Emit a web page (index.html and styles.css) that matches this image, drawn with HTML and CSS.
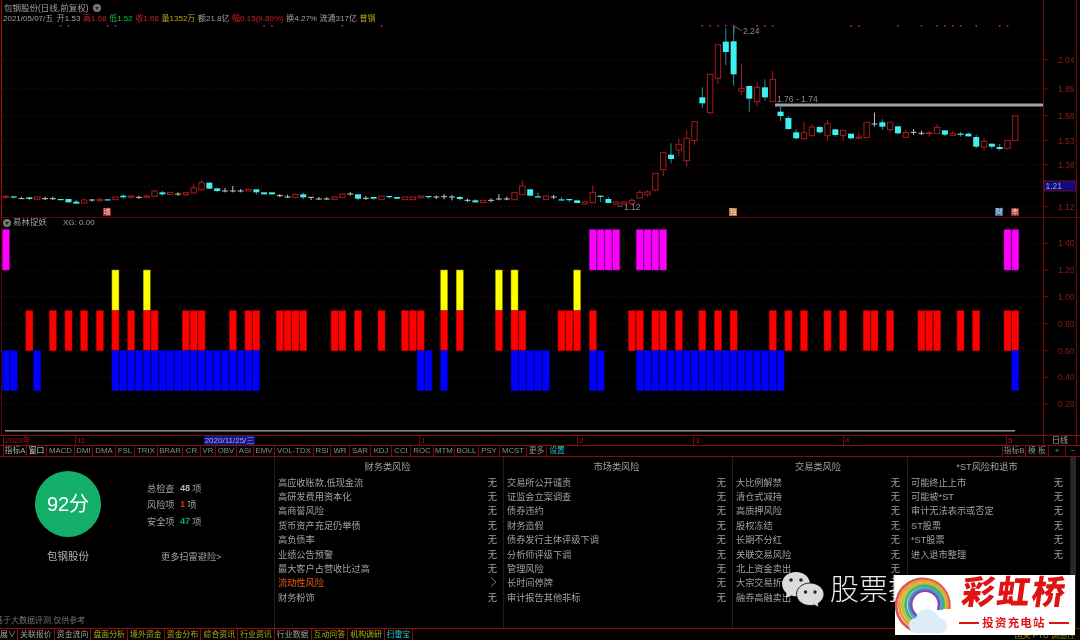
FILE: index.html
```html
<!DOCTYPE html>
<html lang="zh">
<head>
<meta charset="utf-8">
<title>包钢股份</title>
<link rel="stylesheet" href="styles.css">
</head>
<body>
<div class="app">
  <section class="pane pane-main">
    <svg id="main-chart" class="chart" width="1080" height="217" viewBox="0 0 1080 217"></svg>
    <div class="quote">
      <div class="quote-title">包钢股份(日线,前复权)
        <svg class="caret" width="8" height="8" viewBox="0 0 8 8"><circle cx="4" cy="4" r="4" fill="#777"/><path d="M2 3h4L4 6z" fill="#222"/></svg>
      </div>
      <div class="quote-line">
        <span class="q-date">2021/05/07/五</span>
        <span>开1.53</span>
        <span class="up">高1.68</span>
        <span class="down">低1.52</span>
        <span class="up">收1.68</span>
        <span class="vol">量1352万</span>
        <span>额21.8亿</span>
        <span class="up">幅0.15(9.80%)</span>
        <span>换4.27%</span>
        <span>流通317亿</span>
        <span class="vol">普钢</span>
      </div>
    </div>
    <span class="badge b-zeng">增</span>
    <span class="badge b-du">独</span>
    <span class="badge b-cai">财</span>
    <span class="badge b-chuan">串</span>
  </section>

  <section class="pane pane-sub">
    <svg id="sub-chart" class="chart" width="1080" height="217" viewBox="0 218 1080 217"></svg>
    <div class="sub-title">
      <svg class="caret" width="8" height="8" viewBox="0 0 8 8"><circle cx="4" cy="4" r="4" fill="#777"/><path d="M2 3h4L4 6z" fill="#222"/></svg>
      <span class="sub-name">易林捉妖</span>
      <span>XG: 0.00</span>
    </div>
  </section>

  <div class="date-row">
    <span class="tick t0">2020年</span>
    <span class="tick t1">11</span>
    <span class="date-cursor">2020/11/25/三</span>
    <span class="tick t2">1</span>
    <span class="tick t3">2</span>
    <span class="tick t4">3</span>
    <span class="tick t5">4</span>
    <span class="tick t6">5</span>
    <span class="period">日线</span>
  </div>

  <nav class="tab-row">
    <span class="tab w23 lit">指标A</span>
    <span class="tab w20 bright">窗口</span>
    <span class="tab w28">MACD</span>
    <span class="tab w18">DMI</span>
    <span class="tab w23">DMA</span>
    <span class="tab w19">FSL</span>
    <span class="tab w23">TRIX</span>
    <span class="tab w25">BRAR</span>
    <span class="tab w18">CR</span>
    <span class="tab w15">VR</span>
    <span class="tab w21">OBV</span>
    <span class="tab w17">ASI</span>
    <span class="tab w21">EMV</span>
    <span class="tab w39">VOL-TDX</span>
    <span class="tab w17">RSI</span>
    <span class="tab w19">WR</span>
    <span class="tab w21">SAR</span>
    <span class="tab w21">KDJ</span>
    <span class="tab w19">CCI</span>
    <span class="tab w23">ROC</span>
    <span class="tab w21">MTM</span>
    <span class="tab w24">BOLL</span>
    <span class="tab w21">PSY</span>
    <span class="tab w27">MCST</span>
    <span class="tab w20">更多</span>
    <span class="tab w21 cyan">设置</span>
    <span class="tab w23 push">指标B</span>
    <span class="tab w23">模 板</span>
    <span class="tab w17">+</span>
    <span class="tab w15">−</span>
  </nav>

  <section class="panel">
    <div class="score">
      <div class="score-main">
        <div class="gauge">
          <div class="gauge-circle">92分</div>
          <div class="gauge-name">包钢股份</div>
        </div>
        <div class="stats">
          <div class="stat"><span class="stat-label">总检查</span><b class="n-total">48</b><span>项</span></div>
          <div class="stat"><span class="stat-label">风险项</span><b class="n-risk">1</b><span>项</span></div>
          <div class="stat"><span class="stat-label">安全项</span><b class="n-safe">47</b><span>项</span></div>
          <div class="more">更多扫雷避险&gt;</div>
        </div>
      </div>
      <div class="footnote">基于大数据评测,仅供参考</div>
    </div>

    <div class="risk-col c1">
      <h3>财务类风险</h3>
      <div class="risk"><span>高应收账款,低现金流</span><i>无</i></div>
      <div class="risk"><span>高研发费用资本化</span><i>无</i></div>
      <div class="risk"><span>高商誉风险</span><i>无</i></div>
      <div class="risk"><span>货币资产充足仍举债</span><i>无</i></div>
      <div class="risk"><span>高负债率</span><i>无</i></div>
      <div class="risk"><span>业绩公告预警</span><i>无</i></div>
      <div class="risk"><span>最大客户占营收比过高</span><i>无</i></div>
      <div class="risk hot"><span>流动性风险</span><svg width="7" height="10" viewBox="0 0 7 10"><path d="M1 .5 6 5 1 9.5" fill="none" stroke="#777"/></svg></div>
      <div class="risk"><span>财务粉饰</span><i>无</i></div>
    </div>
    <div class="risk-col c2">
      <h3>市场类风险</h3>
      <div class="risk"><span>交易所公开谴责</span><i>无</i></div>
      <div class="risk"><span>证监会立案调查</span><i>无</i></div>
      <div class="risk"><span>债券违约</span><i>无</i></div>
      <div class="risk"><span>财务造假</span><i>无</i></div>
      <div class="risk"><span>债券发行主体评级下调</span><i>无</i></div>
      <div class="risk"><span>分析师评级下调</span><i>无</i></div>
      <div class="risk"><span>管理风险</span><i>无</i></div>
      <div class="risk"><span>长时间停牌</span><i>无</i></div>
      <div class="risk"><span>审计报告其他非标</span><i>无</i></div>
    </div>
    <div class="risk-col c3">
      <h3>交易类风险</h3>
      <div class="risk"><span>大比例解禁</span><i>无</i></div>
      <div class="risk"><span>清仓式减持</span><i>无</i></div>
      <div class="risk"><span>高质押风险</span><i>无</i></div>
      <div class="risk"><span>股权冻结</span><i>无</i></div>
      <div class="risk"><span>长期不分红</span><i>无</i></div>
      <div class="risk"><span>关联交易风险</span><i>无</i></div>
      <div class="risk"><span>北上资金卖出</span><i>无</i></div>
      <div class="risk"><span>大宗交易折价</span><i>无</i></div>
      <div class="risk"><span>融券高融卖出</span><i>无</i></div>
    </div>
    <div class="risk-col c4">
      <h3>*ST风险和退市</h3>
      <div class="risk"><span>可能终止上市</span><i>无</i></div>
      <div class="risk"><span>可能被*ST</span><i>无</i></div>
      <div class="risk"><span>审计无法表示或否定</span><i>无</i></div>
      <div class="risk"><span>ST股票</span><i>无</i></div>
      <div class="risk"><span>*ST股票</span><i>无</i></div>
      <div class="risk"><span>进入退市整理</span><i>无</i></div>
    </div>
    <div class="scrollbar"></div>
  </section>

  <nav class="bottom-tabs">
    <span class="btab first">展∨</span>
    <span class="btab">关联报价</span>
    <span class="btab">资金流向</span>
    <span class="btab yellow">盘面分析</span>
    <span class="btab yellow">境外资金</span>
    <span class="btab yellow">资金分布</span>
    <span class="btab yellow">综合资讯</span>
    <span class="btab yellow">行业资讯</span>
    <span class="btab">行业数据</span>
    <span class="btab yellow">互动问答</span>
    <span class="btab yellow">机构调研</span>
    <span class="btab cyan last">扫雷宝</span>
    <span class="status">国关 PTU 调感性</span>
  </nav>

  <div class="watermark">
    <svg width="44" height="38" viewBox="0 0 44 38">
      <path d="M15 1C7 1 1 6.500 1 13c0 4 2 7 5 9.500L5 27l5-2.500c1.500.5 3 .7 5 .7C23 25.200 29 19.500 29 13S23 1 15 1z" fill="#dcdcdc"/>
      <path d="M29 12c-7.500 0-13.500 5-13.500 11.200S21.500 34.500 29 34.500c1.500 0 3-.2 4.300-.6L38 36.500l-1-4c3.500-2.200 6-5.500 6-9.300C43 17 36.500 12 29 12z" fill="#dcdcdc" stroke="#000" stroke-width=".8"/>
      <circle cx="10" cy="9" r="1.800" fill="#222"/><circle cx="20" cy="9" r="1.800" fill="#222"/>
      <circle cx="24.500" cy="21" r="1.700" fill="#222"/><circle cx="34" cy="21" r="1.700" fill="#222"/>
    </svg>
    <span class="wm-text">股票技</span>
  </div>

  <div class="logo">
    <svg class="rainbow" width="58" height="60" viewBox="0 0 58 60">
      <g fill="none" stroke-width="2.800">
        <path d="M21 56A26.500 26.500 0 1 1 54 34" stroke="#d8584e"/>
        <path d="M22 53A24 24 0 1 1 52 34" stroke="#ee9a35"/>
        <path d="M23 50.500A21.500 21.500 0 1 1 50 34" stroke="#b9c23f"/>
        <path d="M24 48A19 19 0 1 1 48 34" stroke="#4fae63"/>
        <path d="M25 45.500A16.500 16.500 0 1 1 46 35" stroke="#3ba7d8"/>
        <path d="M26 43A14 14 0 1 1 43 35" stroke="#7a52ad"/>
      </g>
      <path d="M22 58c-5 0-8-3.500-8-8 0-4 3-7 7-7 1-5 5-9 11-9 6 0 11 4 12 9 5 0 8 3.500 8 7.500 0 5-3.500 7.500-8 7.500z" fill="#dcedf8"/>
    </svg>
    <div class="logo-side">
      <div class="logo-name">彩虹桥</div>
      <div class="logo-tag"><i></i><span>投资充电站</span><i></i></div>
    </div>
  </div>
</div>
<script src="chart.js"></script>
</body>
</html>
```

FILE: styles.css
```css
* { box-sizing: border-box; }
html, body { margin: 0; background: #000; }
body { font-family: "Liberation Sans", "Noto Sans CJK SC", sans-serif; color: #a0a0a0; }

.app {
  position: relative;
  width: 1080px;
  height: 640px;
  overflow: hidden;
  background: #000;
  display: flex;
  flex-direction: column;
  filter: blur(.35px);
}

/* chart panes */
.pane { position: relative; flex: none; }
.pane-main { height: 218px; border-bottom: 1px solid #5e0606; }
.pane-sub { height: 218px; border-bottom: 1px solid #8c0a0a; }
.chart { display: block; }
.axis-label { font: 8.5px "Liberation Sans", sans-serif; fill: #8c1c1c; }
.price-note { font: 8.5px "Liberation Sans", sans-serif; fill: #8a8a8a; }
.price-cur { font: 8.5px "Liberation Sans", sans-serif; fill: #a0a0b0; }

.quote { position: absolute; left: 3px; top: 3px; font-size: 8px; line-height: 10px; }
.quote-title { display: flex; align-items: center; gap: 4px; margin-left: 1px; font-size: 8.500px; }
.quote-line { display: flex; gap: 2.600px; margin-top: 1px; white-space: nowrap; }
.q-date { margin-right: 1px; }
.up { color: #d02020; }
.down { color: #10c030; }
.vol { color: #b8aa10; }

.badge {
  position: absolute;
  top: 208px;
  width: 8px;
  height: 8px;
  font-size: 7px;
  line-height: 8px;
  text-align: center;
  color: #f0e6e0;
}
.b-zeng { left: 103px; background: #a81c1c; }
.b-du { left: 729px; background: #b87028; }
.b-cai { left: 995px; background: #2a68a8; }
.b-chuan { left: 1011px; background: #a02222; }

.sub-title {
  position: absolute;
  left: 3px;
  top: 0;
  height: 9px;
  display: flex;
  align-items: center;
  font-size: 8px;
  line-height: 9px;
  white-space: nowrap;
}
.sub-name { margin: 0 16px 0 2px; font-size: 8.500px; }

/* date axis */
.date-row {
  position: relative;
  flex: none;
  height: 10px;
  border-bottom: 1px solid #8c0a0a;
  font-size: 8px;
  line-height: 9px;
  color: #a81414;
}
.tick { position: absolute; top: 0; height: 9px; padding-left: 1px; border-left: 1px solid #7a0a0a; }
.t0 { left: 3px; }
.t1 { left: 75px; }
.t2 { left: 419px; }
.t3 { left: 577px; }
.t4 { left: 693px; }
.t5 { left: 843px; }
.t6 { left: 1006px; }
.date-cursor {
  position: absolute;
  left: 204px;
  top: 0;
  width: 51px;
  height: 9px;
  background: #14148c;
  color: #a8a8c8;
  text-align: center;
  white-space: nowrap;
}
.period {
  position: absolute;
  left: 1043px;
  top: 0;
  width: 34px;
  height: 9px;
  border-left: 1px solid #7a0a0a;
  border-right: 1px solid #7a0a0a;
  text-align: center;
  color: #a4a4a4;
}

/* indicator tabs */
.tab-row {
  flex: none;
  height: 11px;
  display: flex;
  padding-left: 3px;
  border-bottom: 1px solid #8c0a0a;
  font-size: 7.800px;
  line-height: 10px;
}
.tab { flex: none; text-align: center; border-left: 1px solid #7c0808; color: #8c8c8c; white-space: nowrap; overflow: hidden; }
.lit { color: #a8a8a8; }
.bright { color: #d0d0d0; }
.cyan { color: #26c8c8; }
.push { margin-left: auto; }
.w15 { width: 15px; }
.w17 { width: 17px; }
.w18 { width: 18px; }
.w19 { width: 19px; }
.w20 { width: 20px; }
.w21 { width: 21px; }
.w23 { width: 23px; }
.w24 { width: 24px; }
.w25 { width: 25px; }
.w27 { width: 27px; }
.w28 { width: 28px; }
.w39 { width: 39px; }

/* risk panel */
.panel {
  flex: none;
  height: 172px;
  display: flex;
  border-bottom: 1px solid #a00808;
  font-size: 9.200px;
}
.score {
  flex: none;
  width: 275px;
  display: flex;
  flex-direction: column;
  border-right: 1px solid #1e1e1e;
  padding: 14px 0 2px;
}
.score-main { display: flex; flex: 1; }
.gauge { width: 136px; display: flex; flex-direction: column; align-items: center; }
.gauge-circle {
  width: 66px;
  height: 66px;
  border-radius: 50%;
  background: #14b06a;
  color: #fff;
  font-size: 20px;
  line-height: 66px;
  text-align: center;
}
.gauge-name { margin-top: 12px; font-size: 10.500px; line-height: 14px; color: #b0b0b0; }
.stats { margin-left: 11px; padding-top: 9px; }
.stat { display: flex; align-items: center; height: 16.300px; }
.stat-label { width: 33px; }
.stat b { font-weight: 700; margin-right: 2px; }
.n-total { color: #b4b4c4; }
.n-risk { color: #e03210; }
.n-safe { color: #10a060; }
.more { margin: 21px 0 0 14px; font-size: 9.200px; line-height: 14px; }
.footnote { margin-left: -5px; font-size: 8px; line-height: 10px; color: #747474; white-space: nowrap; }

.risk-col { flex: none; padding-top: 3px; border-right: 1px solid #1e1e1e; }
.c1 { width: 229px; padding-left: 3px; padding-right: 6px; }
.c2 { width: 229px; padding-left: 3px; padding-right: 6px; }
.c3 { width: 175px; padding-left: 3px; padding-right: 7px; }
.c4 { width: 163px; padding-left: 3px; padding-right: 7px; }
.risk-col h3 { margin: 0; font-size: 9.200px; font-weight: 400; line-height: 14.500px; text-align: center; }
.risk { display: flex; justify-content: space-between; align-items: center; height: 14.400px; white-space: nowrap; }
.risk i { font-style: normal; }
.hot span { color: #e8600c; }
.scrollbar { flex: none; width: 5px; background: #27272c; }

/* bottom tabs */
.bottom-tabs {
  flex: 1;
  display: flex;
  align-items: stretch;
  font-size: 7.900px;
  line-height: 11px;
  white-space: nowrap;
}
.btab { flex: none; width: 36.700px; text-align: center; border-right: 1px solid #8c0a0a; color: #a0a0a0; }
.first { width: 18px; overflow: hidden; text-align: left; }
.last { width: 28px; }
.btab.yellow { color: #b8aa10; }
.btab.cyan { color: #26c8c8; }
.status { margin-left: auto; margin-right: 5px; color: #8a8010; font-size: 8px; line-height: 14px; }

/* overlays */
.watermark {
  position: absolute;
  left: 781px;
  top: 571px;
  display: flex;
  align-items: center;
  gap: 5px;
  color: #eaeaea;
  font-size: 29px;
  line-height: 38px;
  white-space: nowrap;
}
.wm-text { font-weight: 300; }

.logo {
  position: absolute;
  left: 895px;
  top: 575px;
  width: 180px;
  height: 60px;
  background: #fff;
  display: flex;
  overflow: hidden;
}
.rainbow { flex: none; }
.logo-side { flex: 1; display: flex; flex-direction: column; align-items: center; }
.logo-name {
  font-size: 33px;
  font-weight: 900;
  line-height: 36px;
  color: #e01313;
  letter-spacing: 2px;
  transform: skewX(-8deg);
}
.logo-tag { display: flex; align-items: center; gap: 3px; margin-top: 5px; font-size: 11.500px; font-weight: 700; line-height: 14px; color: #e01313; letter-spacing: 1.200px; }
.logo-tag i { width: 20px; height: 1.500px; background: #e01313; }
```

FILE: chart.js
```js
var NS = 'http://www.w3.org/2000/svg';
var STEP = 7.825;
function el(parent, name, attrs, text) {
  var n = document.createElementNS(NS, name);
  for (var k in attrs) n.setAttribute(k, attrs[k]);
  if (text) n.textContent = text;
  parent.appendChild(n);
  return n;
}
function cx(i) { return 5.9 + STEP * i; }

/* type, wick top, body top, body bottom, wick bottom — in measured units, y = base + v / 3 */
var CANDLES = [
  [160, 'r106,109,112,116 c109,109,112,116 w110,116,116,116 c112,112,117,120 r111,111,118,118 w110,116,116,120 w110,116,116,120 c117,117,120,120 c117,117,127,127 c120,125,131,131 r115,120,129,129 w117,120,120,125 r113,118,122,125 c118,118,120,120 r111,111,119,119 c103,107,112,116 r104,108,112,116 w107,112,112,117 r104,108,112,115 r90,93,109,109 c93,97,103,106 r97,97,104,104 w97,102,102,108 r98,98,104,108 r70,84,99,101 r60,68,89,92 c68,68,86,86 c85,85,93,97 w84,93,93,97 w78,93,93,97 w87,93,93,97 r88,88,93,93 c88,88,97,103 c97,97,103,103 c97,97,103,103 w102,107,107,111 w104,111,111,114 r103,103,112,115 c98,103,112,118 w112,112,112,120 w111,117,117,120 w111,117,117,120 r108,111,118,118 r102,102,112,112 w96,102,102,107 c103,103,116,120 w108,115,115,120 c111,111,116,119 r108,108,119,119 c108,108,111,116 c111,111,116,116'],
  [130, 'r201,201,209,209 r201,201,209,209 r198,198,203,206 c198,198,201,207 w197,201,201,207 w193,200,200,208 w195,201,201,211 c197,201,207,211 w206,211,211,216 c207,211,217,217 r211,211,218,218 w205,211,211,217 w192,207,207,211 w200,207,207,211 r188,188,209,209 r152,168,194,194 c178,178,197,197 c187,199,201,201 r198,198,208,208 w195,201,201,207 c201,208,211,211 c207,207,210,216 c211,211,219,219 r213,216,222,222 r166,187,218,218 c197,197,200,216 c201,207,219,219 r213,216,222,222 r214,216,222,222 r204,211,221,226 r181,187,204,204 r181,186,194,200 r130,130,180,184 r68,68,119,138 c40,74,87,100 r25,43,60,78 r0,25,92,110 r-25,-25,32,44'],
  [20, 'c202,232,250,264 r163,163,278,284 r74,74,175,192 c25,65,96,135 c18,64,163,197 r130,206,213,225 c198,198,236,275 r186,202,245,260 c178,202,232,242 r153,178,245,245 c260,275,288,303 c288,294,327,330 c328,337,355,358 r305,338,356,360 r313,321,347,350 c318,321,337,340 r300,311,346,362 c328,328,345,350 r331,331,346,364 c341,341,355,358 r338,351,355,355 r307,307,353,353 w278,312,312,320 c298,307,320,330 r307,307,329,338 c319,319,340,343 r330,338,352,352 w327,337,337,345 w332,340,340,345 r332,338,341,350 r313,322,341,341 c331,331,344,348 r333,340,346,349 c336,341,344,350 c338,341,349,349 c345,351,380,384 r355,364,381,392 c371,371,380,387 c372,381,387,392 r361,361,385,385 r288,288,361,361']
];
var COLOR = { r: '#a81c1c', c: '#3ff0f0', w: '#c4c4c4' };

function drawMain(svg) {
  [59.7, 89, 115.7, 140.3, 164.7, 186.7, 206.7].forEach(function (y) {
    el(svg, 'line', { x1: 0, x2: 1043, y1: y, y2: y, stroke: '#560606', 'stroke-width': 1, 'stroke-dasharray': '1 2' });
    el(svg, 'line', { x1: 1043, x2: 1048, y1: y, y2: y, stroke: '#8c0a0a' });
  });
  el(svg, 'line', { x1: 1.5, x2: 1.5, y1: 0, y2: 217, stroke: '#a00a0a' });
  el(svg, 'line', { x1: 1043.5, x2: 1043.5, y1: 0, y2: 217, stroke: '#7a0a0a' });
  el(svg, 'line', { x1: 1076.5, x2: 1076.5, y1: 0, y2: 217, stroke: '#6a0808' });

  [7, 8, 13, 14, 33, 34, 43, 48, 89, 90, 91, 92, 93, 96, 97, 98, 108, 109, 114, 117, 119, 120, 121, 122, 124, 127, 128].forEach(function (i) {
    el(svg, 'rect', { x: cx(i) - 0.8, y: 25, width: 1.6, height: 1.6, fill: '#c010c0' });
  });

  var i = 0;
  CANDLES.forEach(function (group) {
    var base = group[0];
    group[1].split(' ').forEach(function (s) {
      var type = s.charAt(0);
      var v = s.slice(1).split(',').map(function (n) { return Math.max(0, base + Number(n) / 3); });
      var x = cx(i++);
      var c = COLOR[type];
      var wick = type === 'c' ? '#1f9494' : c;
      el(svg, 'line', { x1: x, x2: x, y1: v[0], y2: v[3], stroke: wick });
      if (type === 'w') {
        el(svg, 'line', { x1: x - 3, x2: x + 3, y1: v[1], y2: v[1], stroke: c });
      } else if (type === 'c') {
        el(svg, 'rect', { x: x - 3, y: v[1], width: 6, height: Math.max(1.2, v[2] - v[1]), fill: c });
      } else {
        el(svg, 'rect', { x: x - 2.7, y: v[1], width: 5.4, height: Math.max(1, v[2] - v[1]), fill: '#000', stroke: c });
      }
    });
  });

  el(svg, 'rect', { x: 775, y: 103.500, width: 268, height: 3, fill: '#a4a4a4' });
  el(svg, 'text', { x: 777, y: 101.500, 'class': 'price-note' }, '1.76 - 1.74');
  el(svg, 'path', { d: 'M734 33V27h2l6 4', fill: 'none', stroke: '#777', 'stroke-width': .8 });
  el(svg, 'text', { x: 743, y: 34, 'class': 'price-note' }, '2.24');
  el(svg, 'path', { d: 'M617 206h6', fill: 'none', stroke: '#777', 'stroke-width': .8 });
  el(svg, 'text', { x: 624, y: 210, 'class': 'price-note' }, '1.12');

  [['2.04', 60], ['1.85', 89], ['1.68', 116], ['1.53', 140.500], ['1.38', 165], ['1.12', 207]].forEach(function (p) {
    el(svg, 'text', { x: 1058, y: p[1] + 3, 'class': 'axis-label' }, p[0]);
  });
  el(svg, 'rect', { x: 1044, y: 181, width: 32, height: 10, fill: '#0c0c86', stroke: '#7a0a0a' });
  el(svg, 'text', { x: 1045.500, y: 189, 'class': 'price-cur' }, '1.21');
}

var BARS = [
  { top: 229.7, bottom: 270, fill: '#ff00ff', edge: '#a000a0', at: [0, 75, 76, 77, 78, 81, 82, 83, 84, 128, 129] },
  { top: 270, bottom: 310.7, fill: '#ffff00', edge: '#8e8e00', at: [14, 18, 56, 58, 63, 65, 73] },
  { top: 310.7, bottom: 350.7, fill: '#ff0000', edge: '#b00000', at: [3, 6, 8, 10, 12, 14, 16, 18, 19, 23, 24, 25, 29, 31, 32, 35, 36, 37, 38, 42, 43, 45, 48, 51, 52, 53, 56, 58, 63, 65, 66, 71, 72, 73, 75, 80, 81, 83, 84, 86, 89, 91, 93, 98, 100, 102, 105, 107, 110, 111, 113, 117, 118, 119, 122, 124, 128, 129] },
  { top: 350.7, bottom: 390.7, fill: '#0000ff', edge: '#0000a8', at: [0, 1, 4, 14, 15, 16, 17, 18, 19, 20, 21, 22, 23, 24, 25, 26, 27, 28, 29, 30, 31, 32, 53, 54, 56, 65, 66, 67, 68, 69, 75, 76, 81, 82, 83, 84, 85, 86, 87, 88, 89, 90, 91, 92, 93, 94, 95, 96, 97, 98, 99, 129] }
];

function drawSub(svg) {
  var rows = [['1.40', 243.3], ['1.20', 270], ['1.00', 296.7], ['0.80', 323.7], ['0.60', 350.7], ['0.40', 377.3], ['0.20', 404]];
  rows.forEach(function (r) {
    el(svg, 'line', { x1: 0, x2: 1043, y1: r[1], y2: r[1], stroke: '#4a0505', 'stroke-dasharray': '1 2' });
    el(svg, 'line', { x1: 1043, x2: 1048, y1: r[1], y2: r[1], stroke: '#8c0a0a' });
    el(svg, 'text', { x: 1058, y: r[1] + 3, 'class': 'axis-label' }, r[0]);
  });
  el(svg, 'line', { x1: 1.5, x2: 1.5, y1: 218, y2: 435, stroke: '#4e0606' });
  el(svg, 'line', { x1: 1043.5, x2: 1043.5, y1: 218, y2: 435, stroke: '#7a0a0a' });
  el(svg, 'line', { x1: 1076.5, x2: 1076.5, y1: 218, y2: 435, stroke: '#6a0808' });
  BARS.forEach(function (b) {
    b.at.forEach(function (i) {
      el(svg, 'rect', {
        x: 2.400 + STEP * i, y: b.top, width: 7, height: b.bottom - b.top,
        fill: b.fill, stroke: b.edge, 'stroke-width': .5
      });
    });
  });
  el(svg, 'rect', { x: 5, y: 430, width: 1010, height: 1.6, fill: '#8a8a8a' });
}

drawMain(document.getElementById('main-chart'));
drawSub(document.getElementById('sub-chart'));
```
